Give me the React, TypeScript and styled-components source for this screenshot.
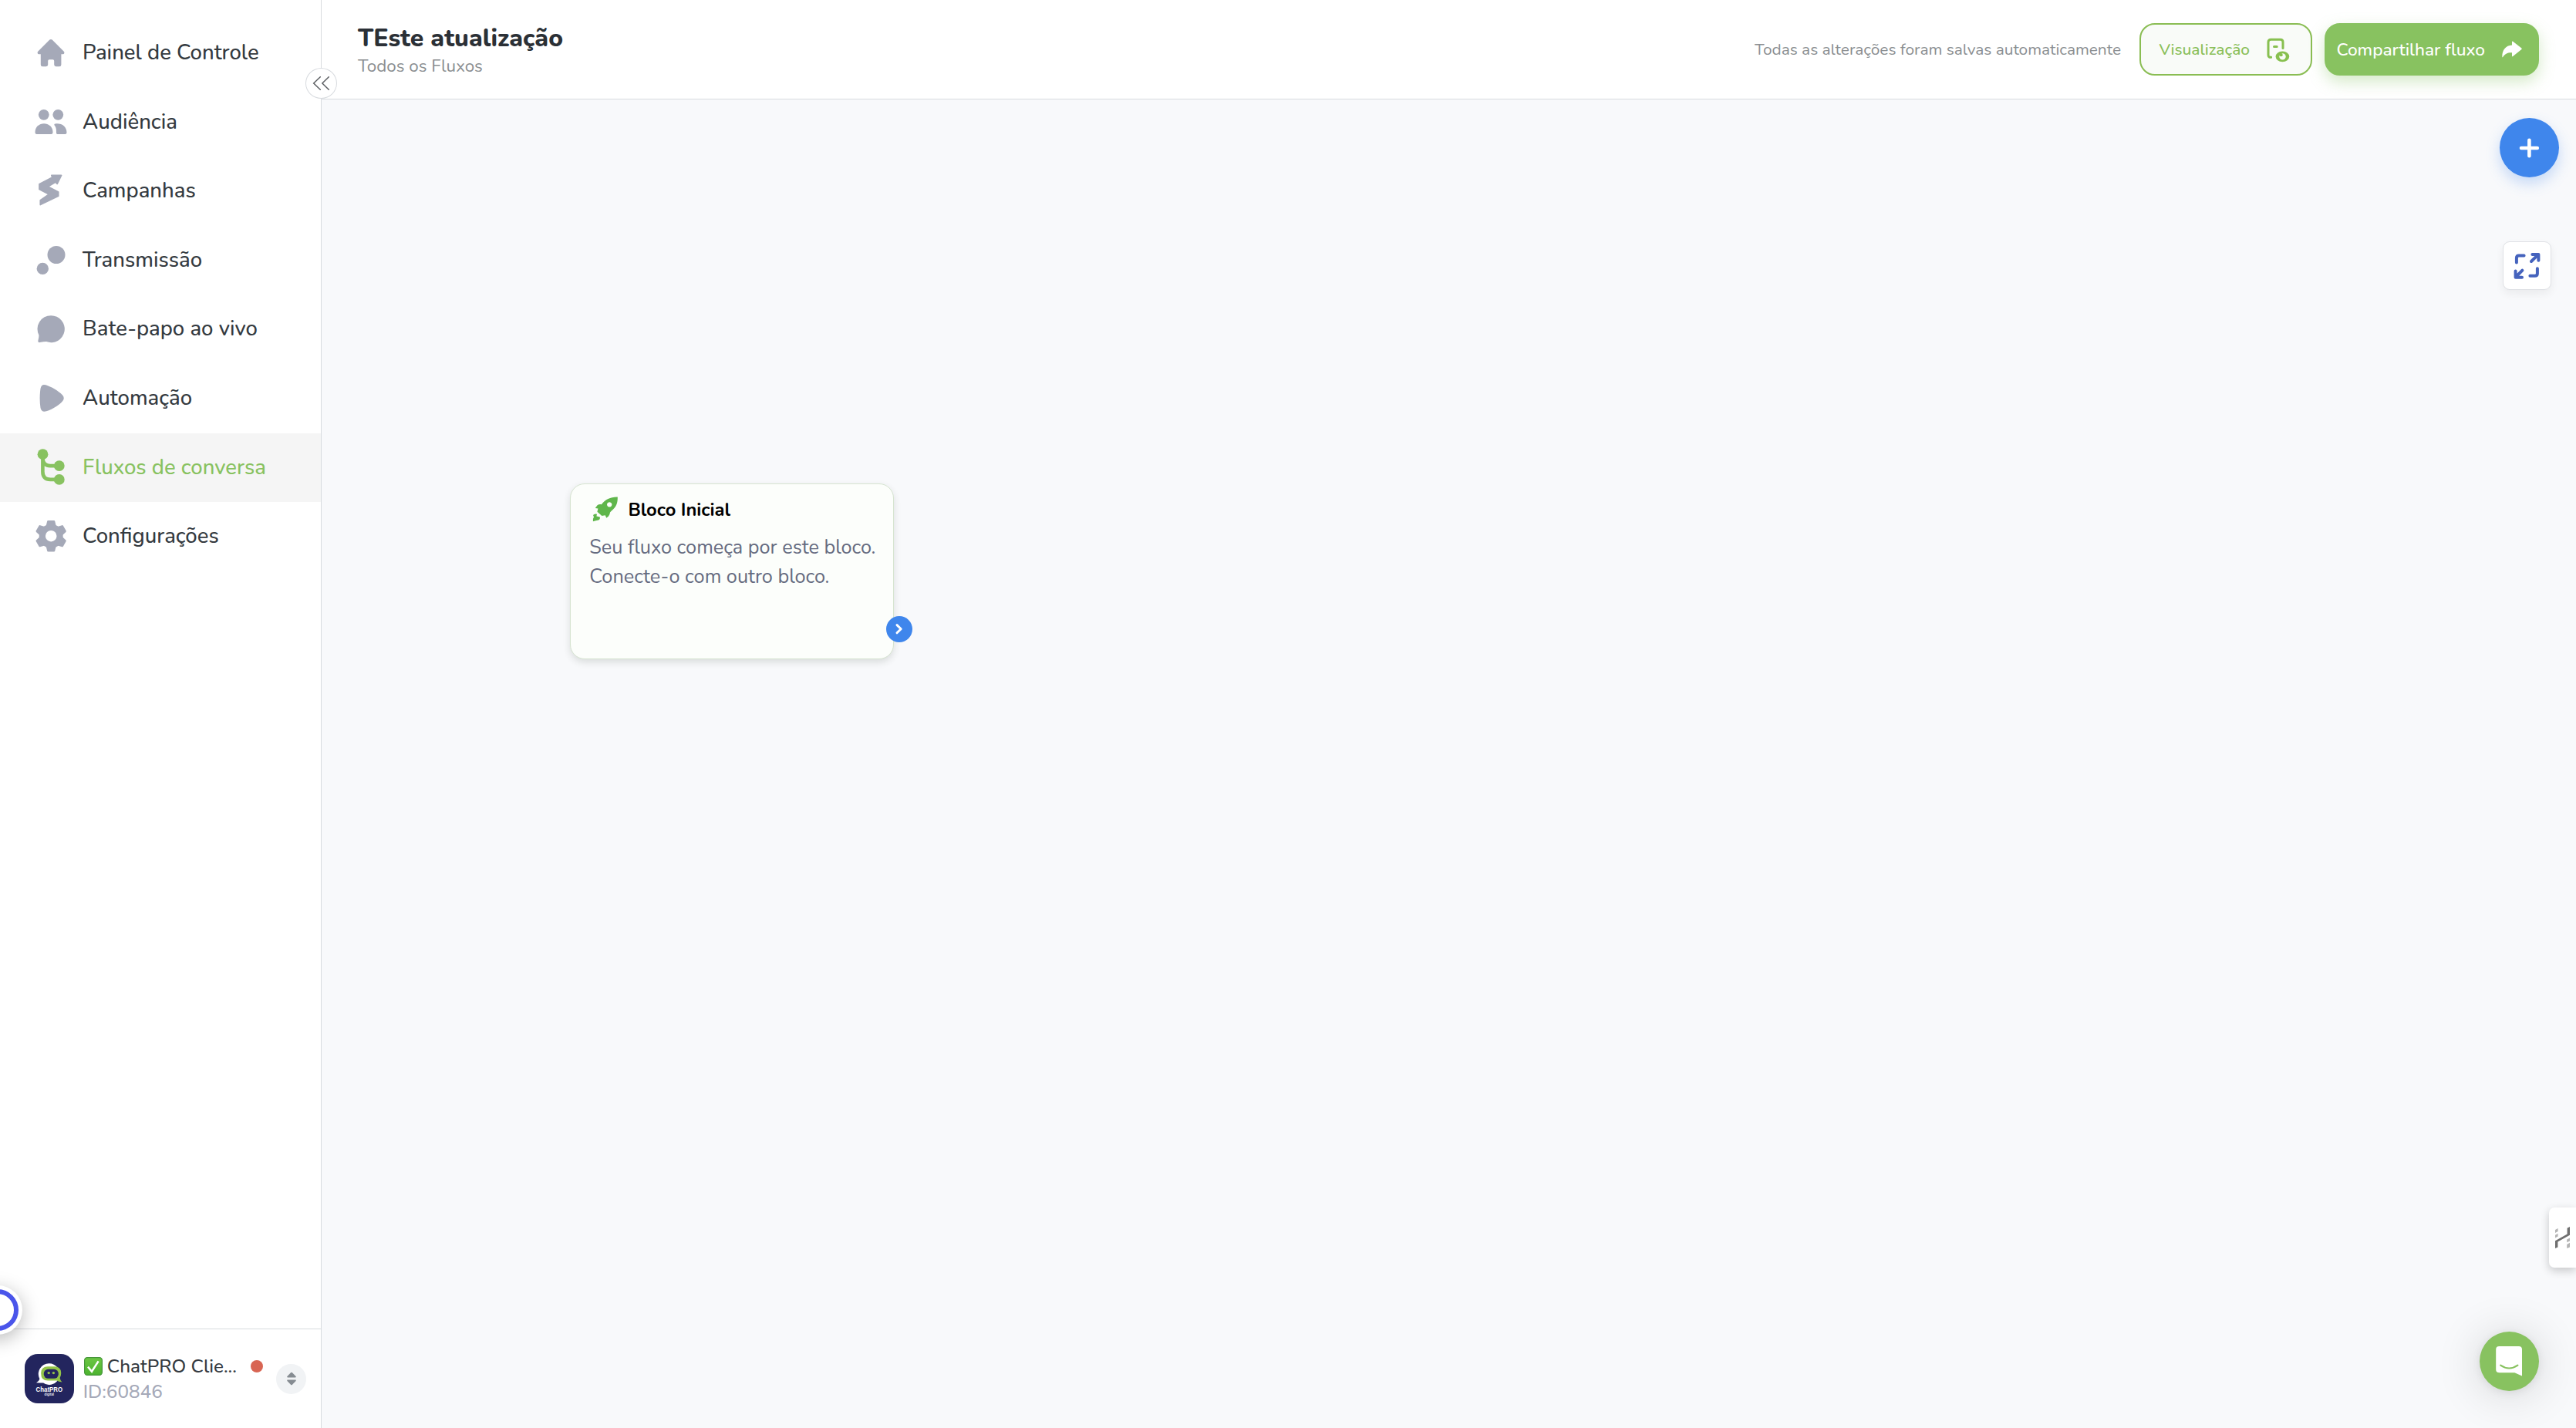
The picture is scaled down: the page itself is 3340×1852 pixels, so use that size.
import React from "react";
import styled, { createGlobalStyle } from "styled-components";

const green = "#88c260";
const blue = "#3f86ec";
const line = "#d8dbdf";
const muted = "#a5a9b8";

const GlobalStyle = createGlobalStyle`
  * { box-sizing: border-box; }
  body {
    margin: 0;
    background: #f8f9fb;
    font-family: Nunito, "Open Sans", sans-serif;
    overflow: hidden;
  }
  svg { display: block; flex: none; }
`;

/* ---------- layout ---------- */

const Shell = styled.div`
  display: grid;
  grid-template-columns: 417px 1fr;
  height: 100vh;
  min-height: 1852px;
`;

const Sidebar = styled.aside`
  position: relative;
  display: flex;
  flex-direction: column;
  background: #fff;
  border-right: 1px solid ${line};
`;

const Main = styled.main`
  display: flex;
  flex-direction: column;
  min-width: 0;
`;

/* ---------- sidebar ---------- */

const Nav = styled.nav`
  flex: 1;
  padding-top: 24px;
`;

const NavItem = styled.a<{ $active?: boolean }>`
  display: flex;
  align-items: center;
  gap: 17.6px;
  height: 89.62px;
  padding-left: 41.5px;
  color: ${p => (p.$active ? green : muted)};
  background: ${p => (p.$active ? "#f5f5f5" : "transparent")};
`;

const NavLabel = styled.span<{ $active?: boolean }>`
  padding-bottom: 1.6px;
  font-size: 27.5px;
  font-weight: 500;
  line-height: 36px;
  white-space: nowrap;
  color: ${p => (p.$active ? green : "#343a40")};
`;

const CollapseButton = styled.button`
  position: absolute;
  top: 88px;
  right: -21px;
  z-index: 2;
  display: grid;
  place-items: center;
  width: 41px;
  height: 40px;
  padding: 0;
  border: 1px solid ${line};
  border-radius: 50%;
  background: #fff;
`;

const Account = styled.footer`
  display: flex;
  align-items: center;
  height: 129px;
  padding-left: 32px;
  border-top: 1px solid ${line};
`;

const Avatar = styled.div`
  width: 64px;
  height: 64px;
  border-radius: 17px;
  background: #23255e;
  overflow: hidden;
`;

const AccountText = styled.div`
  width: 233.3px;
  margin-left: 11.7px;
  padding-top: 1px;
  font-size: 24.3px;
  font-weight: 500;
  line-height: 32.3px;
  white-space: nowrap;
`;

const AccountName = styled.div`
  display: flex;
  align-items: center;
  gap: 5.8px;
  padding-left: 1.3px;
  color: #343a40;
`;

const AccountId = styled.div`
  color: ${muted};
`;

const StatusDot = styled.i`
  width: 16px;
  height: 16px;
  margin-left: auto;
  border-radius: 50%;
  background: #d86553;
`;

const SwitchButton = styled.button`
  display: grid;
  place-items: center;
  width: 39px;
  height: 39px;
  margin-left: 17.4px;
  padding: 0;
  border: 0;
  border-radius: 50%;
  background: #f1f3f5;
`;

const RecorderBubble = styled.div`
  position: fixed;
  left: -35px;
  top: 1667px;
  z-index: 3;
  display: grid;
  place-items: center;
  width: 64px;
  height: 64px;
  border-radius: 50%;
  background: #fff;
  box-shadow: 0 6px 24px rgba(0, 0, 0, 0.28);
`;

const RecorderRing = styled.div`
  width: 54px;
  height: 54px;
  border: 6px solid #4a55ea;
  border-radius: 50%;
`;

/* ---------- header ---------- */

const Header = styled.header`
  display: flex;
  align-items: center;
  height: 129px;
  padding: 0 48px 0 47px;
  background: #fff;
  border-bottom: 1px solid ${line};
`;

const TitleBlock = styled.div`
  display: flex;
  flex-direction: column;
  gap: 2px;
  margin-right: auto;
  padding-top: 1px;
`;

const Title = styled.h1`
  margin: 0;
  font-size: 32px;
  font-weight: 800;
  line-height: 40px;
  color: #2b3036;
`;

const Subtitle = styled.span`
  font-size: 22.4px;
  font-weight: 370;
  line-height: 28px;
  color: #8b8f92;
`;

const SaveNote = styled.span`
  margin-right: 24px;
  font-size: 20.85px;
  font-weight: 370;
  color: #8b8f92;
`;

const HeaderButton = styled.button<{ $solid?: boolean }>`
  display: flex;
  align-items: center;
  justify-content: space-between;
  width: ${p => (p.$solid ? 278 : 224)}px;
  height: 68px;
  margin-left: ${p => (p.$solid ? 16 : 0)}px;
  padding: ${p => (p.$solid ? "0 19px 0 13.4px" : "0 26px 0 23.4px")};
  border: 2px solid ${p => (p.$solid ? green : "#8abd53")};
  border-radius: 20px;
  font-family: inherit;
  font-size: ${p => (p.$solid ? 22.7 : 20.9)}px;
  font-weight: 500;
  white-space: nowrap;
  color: ${p => (p.$solid ? "#fff" : "#8abf58")};
  background: ${p => (p.$solid ? green : "#f9fbf8")};
  box-shadow: ${p => (p.$solid ? "0 8px 20px rgba(136, 194, 96, 0.35)" : "none")};
`;

/* ---------- canvas ---------- */

const Canvas = styled.section`
  position: relative;
  flex: 1;
  background: #f8f9fb;
`;

const Block = styled.article`
  position: absolute;
  left: 321.5px;
  top: 498px;
  width: 420px;
  height: 228.4px;
  padding: 15.6px 0 0 24.7px;
  border: 1px solid #d6e4d0;
  border-radius: 19px;
  background: #fcfefb;
  box-shadow: 0 4px 10px rgba(40, 60, 40, 0.14);
`;

const BlockHead = styled.div`
  display: flex;
  align-items: center;
  gap: 12.2px;
  height: 34px;
  padding-left: 4px;
  font-size: 23.7px;
  font-weight: 700;
  color: #000;
`;

const BlockText = styled.p`
  margin: 13.9px 0 0;
  font-size: 25.3px;
  line-height: 37.3px;
  white-space: nowrap;
  color: #656b80;
`;

const Connector = styled.div`
  position: absolute;
  right: -25.5px;
  top: 171px;
  display: grid;
  place-items: center;
  width: 34px;
  height: 34px;
  border-radius: 50%;
  background: ${blue};
`;

const AddButton = styled.button`
  position: absolute;
  top: 24px;
  right: 22px;
  display: grid;
  place-items: center;
  width: 77px;
  height: 77px;
  padding: 0;
  border: 0;
  border-radius: 50%;
  background: ${blue};
  box-shadow: 0 8px 18px rgba(63, 134, 236, 0.28);
`;

const FullscreenButton = styled.button`
  position: absolute;
  top: 184px;
  right: 32px;
  width: 63px;
  height: 63px;
  padding: 0;
  border: 1px solid #dfe1e5;
  border-radius: 9px;
  background: #fff;
  box-shadow: 0 5px 12px rgba(0, 0, 0, 0.06);
`;

const SideTab = styled.div`
  position: absolute;
  top: 1437px;
  right: 0;
  display: flex;
  align-items: center;
  width: 35px;
  height: 78px;
  padding-left: 8px;
  border-radius: 7px 0 0 7px;
  background: #fff;
  box-shadow: 0 4px 12px rgba(0, 0, 0, 0.2);
`;

const Messenger = styled.button`
  position: absolute;
  top: 1598px;
  right: 48px;
  width: 77px;
  height: 77px;
  padding: 0;
  border: 0;
  border-radius: 50%;
  background: ${green};
  box-shadow: 0 2px 12px rgba(0, 0, 0, 0.08), 0 4px 60px rgba(0, 0, 0, 0.16);
`;

/* ---------- icons ---------- */

const NavIcon = ({ children }: { children: React.ReactNode }) => (
  <svg width="48" height="48" viewBox="0 0 48 48" fill="currentColor">{children}</svg>
);

const HomeIcon = (
  <path d="M22.4 6.6Q24 5.2 25.6 6.6L40.8 21.8Q41.8 23 41.3 24Q41 25.2 39.6 25.2H37.4V38.7Q37.4 41.2 35 41.2H30.6Q28.2 41.2 28.2 38.8V34Q28.2 32.2 26.4 32.2H22Q20.2 32.2 20.2 34V38.8Q20.2 41.2 17.8 41.2H13.2Q10.8 41.2 10.8 38.7V25.2H8.4Q7 25.2 6.7 24Q6.2 23 7.2 21.8Z" />
);

const UsersIcon = (
  <>
    <circle cx="14.8" cy="14.8" r="6.9" />
    <circle cx="33.3" cy="14.8" r="6.9" />
    <path d="M3.5 37.5C3.5 30.5 9 26.3 15 26.3S26.5 30.5 26.5 37.5Q26.5 40 24.5 40H5.5Q3.5 40 3.5 37.5Z" />
    <path d="M28.6 28.6Q27.4 26.3 31.6 26.3C39.5 26.3 44.5 31 44.5 38Q44.5 40 42.5 40H32.5Q31.3 40 31 38.5C31 34 31 31.6 28.6 28.6Z" />
  </>
);

const CampaignIcon = (
  <path
    d="M37.6 3.4H24.8L25.8 6L9 14.8V21.4L21.4 28L10.3 35.8V41.6L33.7 30.2V25.1L20.2 18L29.9 12.2L32.1 14.5Z"
    stroke="currentColor" strokeWidth="1.7" strokeLinejoin="round"
  />
);

const BroadcastIcon = (
  <>
    <circle cx="31" cy="16.5" r="11.5" />
    <circle cx="13.3" cy="34.4" r="7.7" />
  </>
);

const ChatIcon = (
  <path d="M24.2 6.2a17.5 17.5 0 1 1-6 33.9Q15.5 40 9.6 41.1Q7 41.4 7.4 38.8Q8.6 34.5 8.4 31.6A17.5 17.5 0 0 1 24.2 6.2Z" />
);

const PlayIcon = (
  <path d="M10.5 11Q11.5 6.1 15 6.1C22 6.5 36 15.5 39.3 19.8Q42.2 23.4 39.3 27C35 32.5 22 40.5 15.5 40.8Q11.5 40.8 10.5 36Q8.7 23.4 10.5 11Z" />
);

const FlowIcon = (
  <>
    <circle cx="13.5" cy="7.2" r="6.9" />
    <circle cx="34.8" cy="22.1" r="6.9" />
    <circle cx="34.8" cy="39.9" r="6.9" />
    <path d="M13.4 7V29.8Q13.4 39.9 23.4 39.9H34M13.4 13Q14.4 22.1 23 22.1H34" fill="none" stroke="currentColor" strokeWidth="4.6" />
  </>
);

const GearIcon = (
  <>
    {[0, 60, 120, 180, 240, 300].map(a => (
      <path
        key={a}
        transform={`rotate(${a} 24.2 23.2)`}
        d="M20.4 4.2H28L29.6 11H18.8Z"
        stroke="currentColor" strokeWidth="2.6" strokeLinejoin="round"
      />
    ))}
    <circle cx="24.2" cy="23.2" r="11.4" fill="none" stroke="currentColor" strokeWidth="8.2" />
  </>
);

const PreviewIcon = () => (
  <svg width="32" height="34" viewBox="0 0 32 34" fill="none" stroke="#88c050" strokeWidth="3" strokeLinecap="round">
    <path d="M22 15.6V7.6Q22 4.3 18.7 4.3H6.4Q3 4.3 3 7.6V24.6Q3 27.6 6.6 27.3M10.5 13.4H14.2" />
    <ellipse cx="21.4" cy="26.4" rx="8.8" ry="6.8" fill="#88c050" stroke="none" />
    <circle cx="21.5" cy="26.4" r="4.2" fill="#f9fbf8" stroke="none" />
    <circle cx="19.6" cy="24.2" r="2.1" fill="#88c050" stroke="none" />
  </svg>
);

const ShareIcon = () => (
  <svg width="28" height="24" viewBox="0 0 28 24" fill="#fff">
    <path d="M14 2.3Q14 0.9 15.2 1.8L26.4 10.6Q27.2 11.3 26.4 12L15.2 21Q14 21.8 14 20.4V16.3C8.4 16 4.8 17.8 2.2 22Q1.3 22.9 1.3 21.4C1.3 13 5.8 7 14 6.6Z" />
  </svg>
);

const RocketIcon = () => (
  <svg width="34" height="33" viewBox="0 0 34 33">
    <path
      fill="#5fb64b"
      d="M32.8 .6C33 8 31.3 14 24.6 18.8L23 20.6Q22.8 23.6 21 25.4L18.3 27.8L16.7 24.2L12.4 25L6.4 19.8L7.4 15.4L3.8 15L6.5 11.2Q8.5 9.8 11.8 10.2C17 3.8 23.5 .4 32.8 .6ZM22.2 7.2a3.2 3.2 0 1 0 .01 0Z"
      fillRule="evenodd"
    />
    <path fill="#5fb64b" d="M.9 32.2Q.6 28.4 2 26.6L1 24Q3 21.6 6 22.8L5.4 25.6L9.8 26.4Q10.4 29.4 8 30.4Q4.6 31 .9 32.2Z" />
  </svg>
);

const CheckBadge = () => (
  <svg width="24" height="24" viewBox="0 0 24 24">
    <defs>
      <linearGradient id="check" x1="0" y1="0" x2="0" y2="1">
        <stop offset="0" stopColor="#6cc644" />
        <stop offset="1" stopColor="#4cb32f" />
      </linearGradient>
    </defs>
    <rect x=".6" y=".6" width="22.8" height="22.8" rx="3.6" fill="url(#check)" stroke="#45953a" strokeWidth="1.2" />
    <path d="M5 12.6L10 18.8L18.6 5.4" fill="none" stroke="#fff" strokeWidth="2.5" />
  </svg>
);

const Logo = () => (
  <svg width="64" height="64" viewBox="0 0 64 64">
    <path fill="#fff" d="M31.5 12.3a13.8 13.8 0 1 1-7.4 25.3Q20 37.4 15 37.2Q18.6 35.4 19.4 32.6A13.8 13.8 0 0 1 31.5 12.3Z" />
    <path fill="#93c449" d="M30 16.2H38.6Q47.2 16.2 47.2 25Q47.2 28.6 45.6 31Q46 34 48.4 36.4Q44 36.2 41.6 34.6H30Q21.2 34.6 21.2 25.4Q21.2 16.2 30 16.2Z" />
    <rect x="24.8" y="19.8" width="19" height="12" rx="5.6" fill="#23255e" />
    <circle cx="31.2" cy="24.6" r="1.7" fill="#93c449" />
    <circle cx="37.4" cy="24.6" r="1.7" fill="#93c449" />
    <text x="14.6" y="48.8" textLength="34.4" lengthAdjust="spacingAndGlyphs" fontFamily="Liberation Sans, sans-serif" fontSize="8.6" fontWeight="700" fill="#fff">ChatPRO</text>
    <text x="25.6" y="54.4" textLength="12.4" lengthAdjust="spacingAndGlyphs" fontFamily="Liberation Sans, sans-serif" fontSize="4.6" fontWeight="700" fill="#e6e7f2">digital</text>
  </svg>
);

/* ---------- page ---------- */

const navItems: { label: string; icon: React.ReactNode; active?: boolean }[] = [
  { label: "Painel de Controle", icon: HomeIcon },
  { label: "Audiência", icon: UsersIcon },
  { label: "Campanhas", icon: CampaignIcon },
  { label: "Transmissão", icon: BroadcastIcon },
  { label: "Bate-papo ao vivo", icon: ChatIcon },
  { label: "Automação", icon: PlayIcon },
  { label: "Fluxos de conversa", icon: FlowIcon, active: true },
  { label: "Configurações", icon: GearIcon },
];

export default function App() {
  return (
    <>
      <GlobalStyle />
      <Shell>
        <Sidebar>
          <Nav>
            {navItems.map(item => (
              <NavItem key={item.label} $active={item.active}>
                <NavIcon>{item.icon}</NavIcon>
                <NavLabel $active={item.active}>{item.label}</NavLabel>
              </NavItem>
            ))}
          </Nav>
          <CollapseButton aria-label="Recolher menu">
            <svg width="24" height="20" viewBox="0 0 24 20" fill="none" stroke="#5c5f63" strokeWidth="1.5" strokeLinecap="round">
              <path d="M10.3 1.8L1.7 10L10.3 18.2M21.3 1.8L12.9 10L21.3 18.2" />
            </svg>
          </CollapseButton>
          <Account>
            <Avatar><Logo /></Avatar>
            <AccountText>
              <AccountName>
                <CheckBadge />
                <span>ChatPRO Clie...</span>
                <StatusDot />
              </AccountName>
              <AccountId>ID:60846</AccountId>
            </AccountText>
            <SwitchButton aria-label="Trocar conta">
              <svg width="14" height="18" viewBox="0 0 14 18" fill="#868c92">
                <path d="M7 .8Q7.5 .8 8 1.3L12.6 6Q13.4 7.4 12 7.4H2Q.6 7.4 1.4 6L6 1.3Q6.5 .8 7 .8ZM7 17.2Q7.5 17.2 8 16.7L12.6 12Q13.4 10.6 12 10.6H2Q.6 10.6 1.4 12L6 16.7Q6.5 17.2 7 17.2Z" />
              </svg>
            </SwitchButton>
          </Account>
        </Sidebar>
        <Main>
          <Header>
            <TitleBlock>
              <Title>TEste atualização</Title>
              <Subtitle>Todos os Fluxos</Subtitle>
            </TitleBlock>
            <SaveNote>Todas as alterações foram salvas automaticamente</SaveNote>
            <HeaderButton>
              Visualização
              <PreviewIcon />
            </HeaderButton>
            <HeaderButton $solid>
              Compartilhar fluxo
              <ShareIcon />
            </HeaderButton>
          </Header>
          <Canvas>
            <Block>
              <BlockHead>
                <RocketIcon />
                Bloco Inicial
              </BlockHead>
              <BlockText>
                Seu fluxo começa por este bloco.
                <br />
                Conecte-o com outro bloco.
              </BlockText>
              <Connector>
                <svg width="12" height="16" viewBox="0 0 12 16" fill="none" stroke="#fff" strokeWidth="3" strokeLinecap="round" strokeLinejoin="round">
                  <path d="M3 2.6L8.2 7.7L3 12.8" />
                </svg>
              </Connector>
            </Block>
            <AddButton aria-label="Adicionar bloco">
              <svg width="28" height="28" viewBox="0 0 28 28" stroke="#fff" strokeWidth="4.6" strokeLinecap="round">
                <path d="M3 14H23.8M13.4 3.8V24.2" />
              </svg>
            </AddButton>
            <FullscreenButton aria-label="Tela cheia">
              <svg width="61" height="61" viewBox="1 1 61 61" fill="none" stroke="#4563bd" strokeWidth="4" strokeLinecap="round" strokeLinejoin="round">
                <path d="M17.9 27.6V21.6Q17.9 18.4 21 18.4H27.6M44.9 35.2V41.8Q44.9 44.8 41.8 44.8H35.4" />
                <path d="M38.4 16.9H46.4V24.8M37 26L45.8 17.4M16.6 38.4V46.7H25M25.4 37.6L17.2 46" />
              </svg>
            </FullscreenButton>
            <SideTab>
              <svg width="19" height="28" viewBox="0 0 19 28">
                <path fill="#6f6f6f" d="M0 28V18.3L15.6 9.6V1.7L19 0V10.8L3.4 19.6V26.6Z" />
                <path fill="#b4b4b4" d="M0 4L3.6 2V6L0 8ZM0 10.8L3.6 8.8V12.4L0 14.4ZM15.2 16.6L19 14.4V18.4L15.2 20.2ZM15.2 23L19 20.8V26.4L15.2 28Z" />
              </svg>
            </SideTab>
            <Messenger aria-label="Abrir chat">
              <svg width="77" height="77" viewBox="0 0 77 77">
                <path fill="#fff" d="M25.4 19H50.8Q55 19 55 23.2V57.4L45.4 53.2H25.4Q21.2 53.2 21.2 49V23.2Q21.2 19 25.4 19Z" />
                <path d="M27.2 43.6Q38.3 51.4 49.4 43.6" fill="none" stroke={green} strokeWidth="2.2" strokeLinecap="round" />
              </svg>
            </Messenger>
          </Canvas>
        </Main>
      </Shell>
      <RecorderBubble><RecorderRing /></RecorderBubble>
    </>
  );
}
